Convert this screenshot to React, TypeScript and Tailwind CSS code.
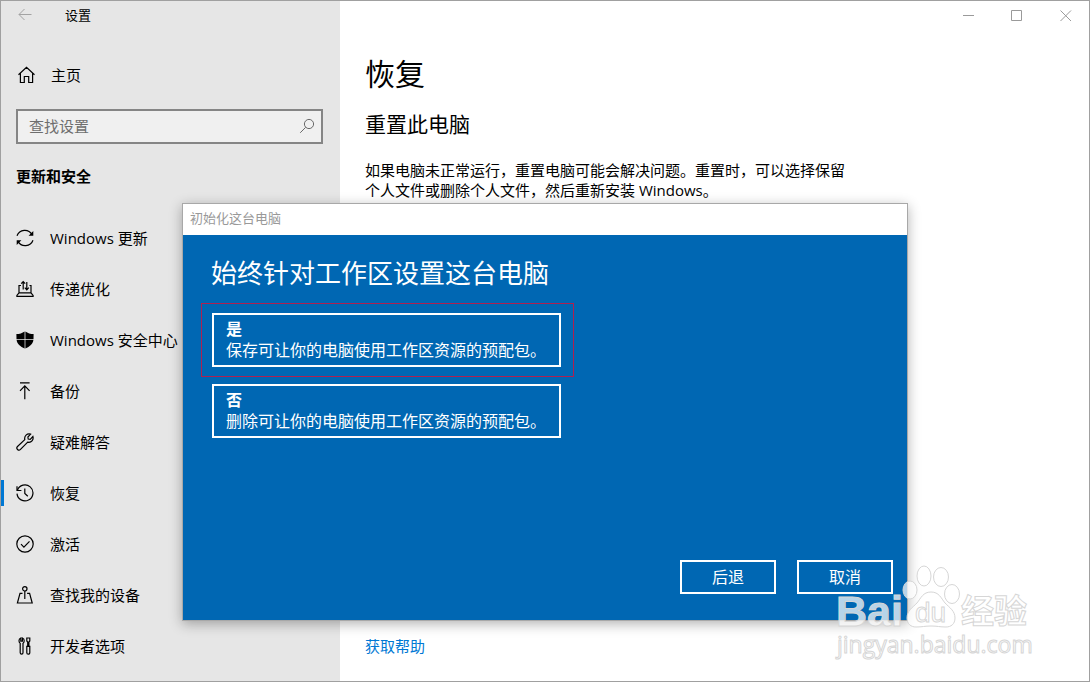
import type { ReactNode } from "react"

const Icon = ({ children }: { children: ReactNode }) => (
  <svg
    viewBox="0 0 18 18"
    className="size-[18px] shrink-0"
    fill="none"
    stroke="currentColor"
    strokeWidth="1.2"
    aria-hidden="true">
    {children}
  </svg>
)

const navItems = [
  {
    label: "Windows 更新",
    icon: (
      <>
        <path d="M1 6.8A8.3 8.3 0 0 1 16 5.6M17 11.200A8.300 8.300 0 0 1 2 12.4" />
        <path
          d="M17.300 2v4.700h-4.700zM.7 16v-4.700h4.700z"
          fill="currentColor"
          stroke="none"
        />
      </>
    )
  },
  {
    label: "传递优化",
    icon: (
      <>
        <path d="M5 5.500H3v7.300h12V5.500h-1.500M3 12.800.9 15.400v1h16.200v-1L15 12.800" />
        <path d="M7.200 9.500V1.500M5.200 3.600l2-2.100 2 2.100M10.800 2v7.800M8.800 7.700l2 2.100 2-2.100" />
      </>
    )
  },
  {
    label: "Windows 安全中心",
    icon: (
      <g fill="currentColor" stroke="none">
        <path d="M8.600 8.300H.5L.4 3C3.500 3 6.300 2 8.600.4z" />
        <path d="M9.400 8.300h8.100l.1-5.300C14.500 3 11.700 2 9.400.4z" />
        <path d="M8.600 9.100H.6c.5 4 3.800 6.600 8 8.400z" />
        <path d="M9.400 9.100h8c-.5 4-3.800 6.600-8 8.400z" />
      </g>
    )
  },
  {
    label: "备份",
    icon: <path d="M4 .9h9.600M8.800 17.300V4M4 8.800l4.800-4.900 4.800 4.900" />
  },
  {
    label: "疑难解答",
    icon: (
      <path d="M14.600 1.200 11.900 4l.3 2 2 .3 2.700-2.800c1 3.400-1.600 6.500-5.200 5.600L4.500 16.400a2 2 0 0 1-3-2.900L8.800 6.600C8 3 11 .2 14.600 1.200z" />
    )
  },
  {
    label: "恢复",
    active: true,
    icon: (
      <>
        <path d="M1.400 6.300A8 8 0 1 1 1 9.600" />
        <path d="M1 2.200v4.300h4.400M8.800 4.500v5l3 2.800" />
      </>
    )
  },
  {
    label: "激活",
    icon: (
      <>
        <circle cx="9" cy="9" r="8.200" />
        <path d="m5 9.200 2.900 2.900 5.600-5.800" />
      </>
    )
  },
  {
    label: "查找我的设备",
    icon: (
      <>
        <circle cx="8.800" cy="2.800" r="2.200" />
        <path d="M8.800 5v8M6.500 7.300H4L1.400 17h14.800L13.600 7.300h-2.500" />
      </>
    )
  },
  {
    label: "开发者选项",
    icon: (
      <>
        <path d="M4.800 1v3.200h1.600V1c1.200.5 1.800 1.600 1.800 2.800 0 1.300-.6 2.100-1.200 2.600v9.300a1.400 1.400 0 0 1-2.800 0V6.400C3.600 5.900 3 5 3 3.800 3 2.600 3.600 1.500 4.800 1z" />
        <path d="M10.800 1h3v3l-.9 1v4h-1.200V5l-.9-1zM10.800 9.400h3v6.300a1.500 1.500 0 0 1-3 0z" />
      </>
    )
  }
]

const Sidebar = () => (
  <aside className="w-[339px] shrink-0 bg-[#e6e6e6]">
    <div className="h-7 pl-[15px] flex items-center text-[13px]">
      <button aria-label="返回" className="text-[#a3a3a3]">
        <svg
          viewBox="0 0 18 18"
          className="size-[18px]"
          fill="none"
          stroke="currentColor">
          <path d="M15.500 8.500H3M8.500 3 3 8.500 8.500 14" />
        </svg>
      </button>
      <span className="ml-[31px]">设置</span>
    </div>

    <a href="#home" className="mt-[26px] h-10 pl-4 flex items-center gap-4">
      <Icon>
        <path d="M1.500 8.800 9.500 1.400l8 7.400M3.400 7.300v9.200h3.900v-6h4.400v6h3.900V7.300" />
      </Icon>
      主页
    </a>

    <div className="mt-[14px] ml-[15px] mr-[17px] h-[35px] flex items-center bg-[#f0f0f0] border-2 border-[#858585] pl-[11px] pr-[6px] pb-[2px]">
      <input
        type="text"
        aria-label="查找设置"
        placeholder="查找设置"
        className="min-w-0 flex-1 bg-transparent outline-none placeholder:text-[#6e6e6e]"
      />
      <svg
        viewBox="0 0 16 16"
        className="size-4 text-[#6a6a6a]"
        fill="none"
        stroke="currentColor"
        aria-hidden="true">
        <circle cx="10" cy="6" r="4.600" />
        <path d="M6.700 9.300 1.200 14.800" />
      </svg>
    </div>

    <h2 className="mt-5 ml-[15px] h-6 leading-6 font-bold">更新和安全</h2>

    <nav className="mt-6">
      {navItems.map((item) => (
        <a
          key={item.label}
          href="#"
          className="relative h-[51px] pl-[15px] flex items-center gap-4">
          {item.active && (
            <span className="absolute left-0 top-[13px] h-[26px] w-[3px] bg-[#0078d4]" />
          )}
          <Icon>{item.icon}</Icon>
          {item.label}
        </a>
      ))}
    </nav>
  </aside>
)

const WindowControls = () => (
  <div className="h-[30px] pr-[15px] flex justify-end items-center gap-[33px] text-[#9a9a9a]">
    <button aria-label="最小化">
      <svg viewBox="0 0 16 16" className="size-4" stroke="currentColor">
        <path d="M3 7.500h11" />
      </svg>
    </button>
    <button aria-label="最大化">
      <svg viewBox="0 0 16 16" className="size-4" fill="none" stroke="currentColor">
        <path d="M2.500 2.500h10v10h-10z" />
      </svg>
    </button>
    <button aria-label="关闭">
      <svg viewBox="0 0 16 16" className="size-4" stroke="currentColor">
        <path d="m2.500 2.500 10.500 10.500M13 2.500 2.500 13" />
      </svg>
    </button>
  </div>
)

const optionClassNames =
  "w-[349px] h-[54px] border-2 border-white pl-3 text-left text-base leading-[21px] whitespace-nowrap"
const actionClassNames =
  "w-24 h-[34px] border-2 border-white text-base leading-5"

const Dialog = () => (
  <div
    role="dialog"
    aria-labelledby="dialog-title"
    className="absolute left-[181px] top-[202px] w-[726px] h-[418px] flex flex-col border border-[#a8a8a8] shadow-[0_3px_12px_rgba(0,0,0,0.3)]">
    <div
      id="dialog-title"
      className="h-[31px] pl-[7px] bg-white text-[13px] leading-[29px] text-[#999]">
      初始化这台电脑
    </div>
    <div className="flex-1 flex flex-col items-start bg-[#0067b3] text-white pl-[18px] pr-[14px] pb-[26px]">
      <h2 className="mt-5 ml-[10px] text-[26px] leading-9">
        始终针对工作区设置这台电脑
      </h2>
      <div className="mt-3 flex border border-[#b02050] pl-[10px] pr-3 py-[9px]">
        <button className={optionClassNames}>
          <b className="block">是</b>
          保存可让你的电脑使用工作区资源的预配包。
        </button>
      </div>
      <div className="mt-[7px] ml-[11px] flex">
        <button className={optionClassNames}>
          <b className="block">否</b>
          删除可让你的电脑使用工作区资源的预配包。
        </button>
      </div>
      <div className="mt-auto self-end flex gap-[21px]">
        <button className={actionClassNames}>后退</button>
        <button className={actionClassNames}>取消</button>
      </div>
    </div>
  </div>
)

const Watermark = () => (
  <svg
    viewBox="0 0 205 100"
    className="pointer-events-none absolute left-[829px] top-[559px] w-[205px] h-[100px]"
    fill="#fff"
    fillOpacity="0.72"
    stroke="#d6d6d6"
    strokeWidth="1">
    <ellipse cx="80" cy="30" rx="7" ry="9" />
    <ellipse cx="94" cy="16" rx="7" ry="10" />
    <ellipse cx="111" cy="17" rx="7.500" ry="9.500" />
    <ellipse cx="122" cy="34" rx="7.500" ry="9.500" />
    <path d="M101 32c8 0 10 6 14 11 5 5 10 8 10 15 0 6-4 9-9 9-6 0-9-1-15-1s-9 1-15 1c-5 0-9-3-9-9 0-7 5-10 10-15 4-5 6-11 14-11z" />
    <text x="6" y="66" fontSize="43" fontWeight="700" fontFamily="Liberation Sans">
      Bai
    </text>
    <text x="85" y="62" fontSize="28" fontFamily="Liberation Sans">
      du
    </text>
    <text x="131" y="63" fontSize="33" fontWeight="700">
      经验
    </text>
    <text x="7" y="93" fontSize="23">
      jingyan.baidu.com
    </text>
  </svg>
)

export default function App() {
  return (
    <div
      lang="zh-CN"
      className="relative min-h-screen flex border border-[#a0a0a0] bg-white text-black text-[15px] leading-5 font-['Open_Sans','Noto_Sans_CJK_SC',sans-serif]">
      <Sidebar />
      <main className="flex-1 min-w-0 flex flex-col">
        <WindowControls />
        <div className="flex-1 flex flex-col items-start pl-[25px] pb-[25px]">
          <h1 className="mt-[23px] text-[30px] leading-10">恢复</h1>
          <h2 className="mt-4 text-[21px] leading-7">重置此电脑</h2>
          <p className="mt-[22px] max-w-[485px]">
            如果电脑未正常运行，重置电脑可能会解决问题。重置时，可以选择保留个人文件或删除个人文件，然后重新安装
            Windows。
          </p>
          <a href="#help" className="mt-auto text-[#0078d4]">
            获取帮助
          </a>
        </div>
      </main>
      <Dialog />
      <Watermark />
    </div>
  )
}
